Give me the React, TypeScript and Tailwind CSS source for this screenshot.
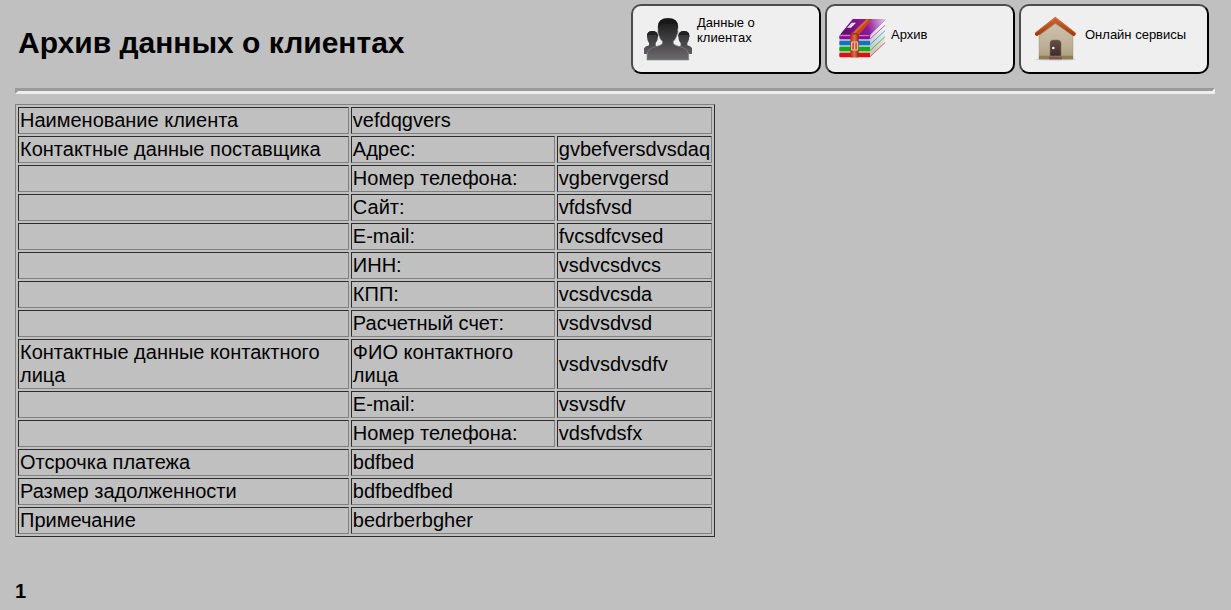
import type { ReactNode } from 'react';
import clsx from 'clsx';

interface NavItem {
  label: string;
  icon: ReactNode;
  twoLines?: boolean;
}

interface ClientRow {
  title?: string;
  field?: string;
  value: string;
}

const rows: ClientRow[] = [
  { title: 'Наименование клиента', value: 'vefdqgvers' },
  { title: 'Контактные данные поставщика', field: 'Адрес:', value: 'gvbefversdvsdaq' },
  { field: 'Номер телефона:', value: 'vgbervgersd' },
  { field: 'Сайт:', value: 'vfdsfvsd' },
  { field: 'E-mail:', value: 'fvcsdfcvsed' },
  { field: 'ИНН:', value: 'vsdvcsdvcs' },
  { field: 'КПП:', value: 'vcsdvcsda' },
  { field: 'Расчетный счет:', value: 'vsdvsdvsd' },
  { title: 'Контактные данные контактного лица', field: 'ФИО контактного лица', value: 'vsdvsdvsdfv' },
  { field: 'E-mail:', value: 'vsvsdfv' },
  { field: 'Номер телефона:', value: 'vdsfvdsfx' },
  { title: 'Отсрочка платежа', value: 'bdfbed' },
  { title: 'Размер задолженности', value: 'bdfbedfbed' },
  { title: 'Примечание', value: 'bedrberbgher' },
];

function PeopleIcon() {
  return (
    <svg viewBox="12 15 144 144" className="size-12 shrink-0" aria-hidden="true">
      <defs>
        <linearGradient id="person" x1="0" y1="25" x2="0" y2="150" gradientUnits="userSpaceOnUse">
          <stop offset="0" stopColor="#181818" />
          <stop offset="0.45" stopColor="#3b3a3c" />
          <stop offset="1" stopColor="#6d6b6d" />
        </linearGradient>
      </defs>
      <g fill="url(#person)">
        <path d="M21 78q0-15 16-15t17 15l-1 10q-2 7-6 11v8l14 5v20H12v-17q3-6 15-9v-7q-4-4-5-11z" />
        <path d="M115 78q1-15 17-15t16 15l-1 10q-2 7-5 11v7q11 3 15 9v17h-48v-20l13-5v-8q-5-4-6-11z" />
      </g>
      <path d="M21 80v-3q1-14 16-14t17 14v4q-3-6-7-7-10 2-20 0-4 2-6 6zM115 80v-3q1-14 17-14t16 14v4q-2-6-6-7-10 2-20 0-5 2-7 6z" fill="#202020" />
      <path
        d="M54 52Q54 25 84 25t30 27l-1 10q2 2 0 7l-3 9q-3 10-10 16v7q6 6 20 9 24 5 26 25v15H21v-15q2-20 26-25 14-3 20-9v-7q-7-6-10-16l-3-9q-1-5 0-7z"
        fill="url(#person)"
        stroke="#8a888a"
        strokeWidth="2"
      />
      <path d="M54 57V50Q54 25 84 25t30 25v7q-3-11-9-17-7 4-20 2-15-3-22 1-7 5-9 14z" fill="#181818" />
    </svg>
  );
}

function ArchiveIcon() {
  return (
    <svg viewBox="12 15 144 144" className="size-12 shrink-0" aria-hidden="true">
      <defs>
        <linearGradient id="cover" x1="20" y1="75" x2="152" y2="30" gradientUnits="userSpaceOnUse">
          <stop offset="0" stopColor="#5d0869" />
          <stop offset="0.6" stopColor="#8c1c9a" />
          <stop offset="1" stopColor="#e3bde8" />
        </linearGradient>
        <linearGradient id="strap" x1="49" y1="0" x2="74" y2="0" gradientUnits="userSpaceOnUse">
          <stop offset="0" stopColor="#a83210" />
          <stop offset="0.5" stopColor="#dc6b48" />
          <stop offset="1" stopColor="#96270a" />
        </linearGradient>
        <linearGradient id="pages" x1="108" y1="100" x2="152" y2="60" gradientUnits="userSpaceOnUse">
          <stop offset="0" stopColor="#c9c9c9" />
          <stop offset="1" stopColor="#f3f3f3" />
        </linearGradient>
      </defs>
      <path d="M106 76L153 30V98L108 142z" fill="url(#pages)" />
      <path d="M16 82H107V139H16z" fill="#cfcfcf" />
      <path d="M18 74L56 27H153L109 75z" fill="url(#cover)" />
      <path d="M18 74H109L107 88H17q-4-7 1-14z" fill="#8c0a96" />
      <path d="M17 92H108V106H17q-3-7 0-14z" fill="#0878bd" />
      <path d="M17 110H108V124H17q-3-7 0-14z" fill="#14aa14" />
      <path d="M17 128H108V142H17q-3-7 0-14z" fill="#df1010" />
      <path d="M18 77H106" stroke="#c98fce" strokeWidth="3" />
      <path d="M109 75L153 29" stroke="#b978c2" strokeWidth="3" />
      <path d="M108 87L153 46" stroke="#b860c2" strokeWidth="3" />
      <path d="M108 104L153 62" stroke="#3fa4dc" strokeWidth="3" />
      <path d="M108 122L153 80" stroke="#44ca44" strokeWidth="3" />
      <path d="M108 140L153 98" stroke="#ef5a5a" strokeWidth="3" />
      <path d="M53 38H66L51 53H39z" fill="#f6e9f8" />
      <path d="M44 51L57 40" stroke="#cda6d2" strokeWidth="2" />
      <path d="M50 73L96 28H115L74 74z" fill="#cb4718" />
      <path d="M61 68L102 28" stroke="#e0703f" strokeWidth="4" />
      <path d="M49 73H74V142H49z" fill="url(#strap)" />
      <path d="M49 78L56 71H68L74 78" fill="none" stroke="#79200a" strokeWidth="2" />
      <path d="M53 96H71V120H53z" fill="#dc5328" stroke="#e4d2bd" strokeWidth="3" />
      <path d="M62 99V118" stroke="#f4d7c4" strokeWidth="3" />
    </svg>
  );
}

function HouseIcon() {
  return (
    <svg viewBox="6 15 144 144" className="size-12 shrink-0" aria-hidden="true">
      <defs>
        <linearGradient id="wall" x1="0" y1="30" x2="0" y2="148" gradientUnits="userSpaceOnUse">
          <stop offset="0" stopColor="#cfc5b2" />
          <stop offset="0.65" stopColor="#bdb096" />
          <stop offset="1" stopColor="#aa9b77" />
        </linearGradient>
        <linearGradient id="roof" x1="0" y1="20" x2="0" y2="76" gradientUnits="userSpaceOnUse">
          <stop offset="0" stopColor="#d2682f" />
          <stop offset="1" stopColor="#a5390c" />
        </linearGradient>
        <linearGradient id="door" x1="0" y1="90" x2="0" y2="138" gradientUnits="userSpaceOnUse">
          <stop offset="0" stopColor="#665047" />
          <stop offset="1" stopColor="#3c2b26" />
        </linearGradient>
      </defs>
      <ellipse cx="77" cy="148" rx="63" ry="4" fill="#cfcfcf" />
      <path d="M27 66L76 29L129 68V147H27z" fill="url(#wall)" stroke="#a3977e" strokeWidth="1.5" />
      <path d="M28 74L76 39L128 75" fill="none" stroke="#8f856f" strokeWidth="4" />
      <path d="M27 137H129V148H27z" fill="#8c7c59" />
      <path d="M60 138V98q1-8 10-8h13q9 0 10 8v40z" fill="url(#door)" stroke="#85705d" strokeWidth="1.5" />
      <path d="M57 138H96V148H57z" fill="#79594b" />
      <path d="M57 139H96" stroke="#a98b74" strokeWidth="1.5" />
      <circle cx="70" cy="114" r="4" fill="#eeeae5" />
      <path d="M76 20L137 68V75L131 79L76 38L21 79L15 75V68z" fill="url(#roof)" />
      <path d="M17 68L76 23L135 68" fill="none" stroke="#d97a45" strokeWidth="2" />
    </svg>
  );
}

const navItems: NavItem[] = [
  { label: 'Данные о клиентах', icon: <PeopleIcon />, twoLines: true },
  { label: 'Архив', icon: <ArchiveIcon /> },
  { label: 'Онлайн сервисы', icon: <HouseIcon /> },
];

function NavButton({ label, icon, twoLines }: NavItem) {
  return (
    <button
      type="button"
      className="flex w-[190px] items-start gap-[5px] rounded-[10px] border-2 border-t-[#4c4c4c] border-r-black border-b-black border-l-[#4c4c4c] bg-[#efefef] px-[11px] py-[9px] text-left text-[13px] leading-[15px] text-black"
    >
      {icon}
      <span className={clsx(twoLines ? 'max-w-[100px]' : 'mt-3')}>{label}</span>
    </button>
  );
}

const cell =
  'border border-t-[#2c2c2c] border-r-[#808080] border-b-[#808080] border-l-[#2c2c2c] p-px';

function ClientTable() {
  return (
    <table className="mt-[10px] w-[700px] max-w-full border-separate border-spacing-[2px] border border-t-[#808080] border-r-[#2c2c2c] border-b-[#2c2c2c] border-l-[#808080] text-[20px] leading-[23px]">
      <colgroup>
        <col className="w-[331px]" />
        <col className="w-[204px]" />
        <col />
      </colgroup>
      <tbody>
        {rows.map((row, i) => (
          <tr key={i} className="h-[27px]">
            <td className={cell}>{row.title}</td>
            {row.field && <td className={cell}>{row.field}</td>}
            <td className={cell} colSpan={row.field ? 1 : 2}>
              {row.value}
            </td>
          </tr>
        ))}
      </tbody>
    </table>
  );
}

export default function App() {
  return (
    <div className="min-h-screen bg-[#c0c0c0] px-[15px] pt-1 font-['Liberation_Sans',Arial,sans-serif] text-black">
      <header className="flex items-start justify-between pr-[7px] pb-[14px] pl-[3px]">
        <h1 className="mt-5 text-[30px] leading-[38px] font-bold">Архив данных о клиентах</h1>
        <nav className="flex gap-1">
          {navItems.map((item) => (
            <NavButton key={item.label} {...item} />
          ))}
        </nav>
      </header>
      <hr className="mr-px border-[3px] border-t-[#9a9a9a] border-r-[#eeeeee] border-b-[#eeeeee] border-l-[#9a9a9a]" />
      <main>
        <ClientTable />
        <p className="mt-[43px] text-[20px] leading-[23px] font-bold">1</p>
      </main>
    </div>
  );
}
